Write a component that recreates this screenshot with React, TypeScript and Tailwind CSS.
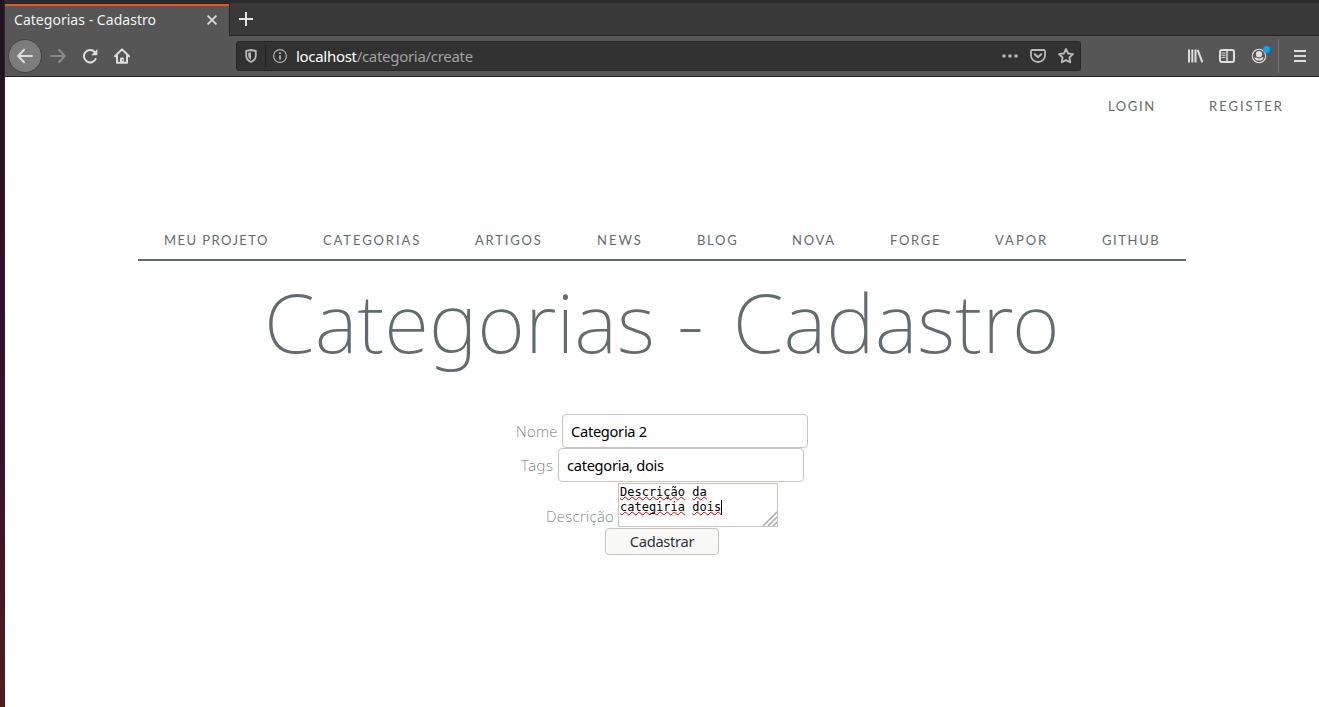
import type { ReactNode } from "react";

const ui = "font-['Noto_Sans',sans-serif]";
const brand = "font-['Lato','Noto_Sans',sans-serif]";

const navItems = [
  { label: "Meu Projeto", box: "w-[159px] tracking-[1.45px]" },
  { label: "Categorias", box: "w-[152px] tracking-[1.9px]" },
  { label: "Artigos", box: "w-[122px] tracking-[1.8px]" },
  { label: "News", box: "w-[100px] tracking-[2px]" },
  { label: "Blog", box: "w-[95px] tracking-[1.7px]" },
  { label: "Nova", box: "w-[98px] tracking-[1.7px]" },
  { label: "Forge", box: "w-[105px] tracking-[1.7px]" },
  { label: "Vapor", box: "w-[107px] tracking-[2px]" },
  { label: "GitHub", box: "w-[60px] tracking-[1.6px]" },
];

function Icon({ className = "", children }: { className?: string; children: ReactNode }) {
  return (
    <svg
      viewBox="0 0 16 16"
      className={`size-4 shrink-0 ${className}`}
      fill="none"
      stroke="currentColor"
      strokeWidth="2"
      strokeLinecap="round"
      strokeLinejoin="round"
    >
      {children}
    </svg>
  );
}

function TabStrip() {
  return (
    <div className="flex h-9 shrink-0 flex-col">
      <div className="h-[3px] bg-[#2a2a2a]" />
      <div className="flex flex-1 bg-[#393939]">
        <div className="flex h-[33px] w-[224px] items-center border-t border-[#252525] bg-[#565656] text-[#f2f2f2]">
          <div className="flex h-8 w-full items-center border-t-2 border-[#e95420] pb-[2px] pl-[9px]">
            <span className={`${ui} w-[193px] text-[14px] leading-[18px] tracking-[0.03px] whitespace-nowrap`}>
              Categorias - Cadastro
            </span>
            <svg viewBox="0 0 10 10" className="size-[10px] text-[#e0e0e0]" stroke="currentColor" strokeWidth="1.7">
              <path d="M.6.6l8.8 8.8M9.4.6L.6 9.4" />
            </svg>
          </div>
        </div>
        <div className="flex flex-1 items-center border-b border-l border-[#252525] pl-[9px] text-[#e4e4e4]">
          <svg viewBox="0 0 14 14" className="size-[14px]" stroke="currentColor" strokeWidth="2">
            <path d="M7 0v14M0 7h14" />
          </svg>
        </div>
      </div>
    </div>
  );
}

function Toolbar() {
  return (
    <div className="flex h-[41px] shrink-0 items-center border-b border-[#252525] bg-[#565656] text-[#dedede]">
      <div className="ml-[3px] flex size-[34px] items-center justify-center rounded-full border border-[#424242] bg-[#7c7c7c]">
        <Icon>
          <path d="M15 8H1.5M7 1.8L1.2 8L7 14.2" />
        </Icon>
      </div>
      <Icon className="ml-2 text-[#8a8a8a]">
        <path d="M1 8H14.5M9 1.8L14.8 8L9 14.2" />
      </Icon>
      <Icon className="ml-4">
        <path d="M14 10.2A6.200 6.200 0 1 1 12.8 4.1" strokeLinecap="butt" />
        <path d="M15.400 1v6.200h-6.200z" fill="currentColor" stroke="none" />
      </Icon>
      <Icon className="ml-4">
        <path d="M1 8.2L8 1.4l7 6.8M3 8v6.8h10V8" />
        <path d="M6 15v-4.5a1 1 0 0 1 1-1h2a1 1 0 0 1 1 1V15z" fill="currentColor" stroke="none" />
        <path d="M8.7 11.8v.8" stroke="#565656" strokeWidth="1" />
      </Icon>

      <div className="ml-[106px] flex h-[30px] w-[845px] shrink-0 items-center rounded-[3px] border border-[#262626] bg-[#323232] text-[#b8b8b8]">
        <svg viewBox="0 0 12 14" className="ml-2 h-[14px] w-3 shrink-0" fill="none">
          <path d="M6 1L1.2 2v4.8c0 3 2 5 4.8 6.2 2.800-1.200 4.800-3.200 4.800-6.200V2z" stroke="currentColor" strokeWidth="1.8" strokeLinejoin="round" />
          <path d="M6 3.200v7.600c-1.700-.9-2.800-2.200-2.800-4V3.800z" fill="currentColor" />
        </svg>
        <div className="ml-2 h-[22px] w-px bg-[#232323]" />
        <svg viewBox="0 0 14 14" className="ml-[7px] size-[14px] shrink-0" fill="none" stroke="currentColor">
          <circle cx="7" cy="7" r="6.400" strokeWidth="1.100" />
          <path d="M7 6.200v4.300M7 3.300v1.700" strokeWidth="1.700" />
        </svg>
        <span className={`${ui} ml-[9px] flex-1 text-[15px] leading-5 tracking-[-0.3px] whitespace-nowrap text-[#a2a2a2]`}>
          <span className="text-white">localhost</span>/categoria/create
        </span>
        <Icon className="text-[#b4b4b4]">
          <path d="M2 8h.01M8 8h.01M14 8h.01" strokeWidth="3.600" />
        </Icon>
        <Icon className="ml-3">
          <path d="M2.200 2h11.600A1.200 1.200 0 0 1 15 3.200V7.500a7 6.500 0 0 1-14 0V3.200A1.200 1.200 0 0 1 2.200 2z" strokeWidth="1.800" />
          <path d="M4.800 6.200L8 9.300l3.200-3.100" />
        </Icon>
        <Icon className="mr-1.5 ml-3">
          <path d="M8 1l2.100 4.500 4.900.6-3.600 3.400.9 4.900L8 12l-4.300 2.400.9-4.900L1 6.100l4.900-.6z" strokeWidth="1.800" />
        </Icon>
      </div>

      <Icon className="ml-[106px]">
        <path d="M2 1.500v13M5.300 1.500v13M8.500 1.500v13M10.600 1.800l4.800 12.500" strokeLinecap="butt" />
      </Icon>
      <Icon className="ml-4">
        <rect x="1" y="2" width="14" height="12" rx="2" />
        <path d="M8 2v12" strokeWidth="1.500" />
        <path d="M3 5h3M3 7.200h3M3 9.400h3" strokeWidth="1" />
      </Icon>
      <div className="relative ml-4 size-4">
        <Icon>
          <circle cx="8" cy="8" r="6.700" strokeWidth="1.100" />
          <circle cx="8" cy="6.200" r="3.100" fill="currentColor" stroke="none" />
          <path d="M3.200 9.400h2.300a3.800 3.800 0 0 0 5 0h2.300A5.200 5.200 0 0 1 3.200 9.400z" fill="currentColor" stroke="none" />
        </Icon>
        <span className="absolute -top-[2px] left-3 size-[7px] rounded-full bg-[#00a9f4]" />
      </div>
      <div className="ml-[11px] h-[34px] w-px bg-[#757575]" />
      <svg viewBox="0 0 12 12" className="ml-[15px] h-3 w-3" stroke="currentColor" strokeWidth="2">
        <path d="M0 1h12M0 6h12M0 11h12" />
      </svg>
    </div>
  );
}

function ResizeGrip() {
  return (
    <svg viewBox="0 0 15 15" className="pointer-events-none absolute right-0 bottom-0 size-[15px]" stroke="#aaa" strokeWidth="1.500">
      <path d="M1 15L15 1M6 15l9-9M11 15l4-4" />
    </svg>
  );
}

function Misspelled({ children }: { children: string }) {
  return (
    <span className="underline decoration-[#e80000] decoration-wavy decoration-[1px] underline-offset-[0px] [text-decoration-skip-ink:none]">
      {children}
    </span>
  );
}

function CategoryForm() {
  const field = `${ui} flex h-[34px] w-[246px] items-center rounded-[4px] border border-[#c8c4be] bg-white pl-2 text-[14.67px] text-black`;
  const label = "font-['Noto_Sans',sans-serif] text-[15px] font-extralight text-[#636b6f] whitespace-nowrap";
  return (
    <form className="mt-[31px] flex flex-col">
      <div className="flex items-center pl-[511px]">
        <label className={`${label} w-[46px] tracking-[0.3px]`}>Nome</label>
        <div className={`${field} tracking-[-0.3px]`}>Categoria 2</div>
      </div>
      <div className="flex items-center pl-[515px]">
        <label className={`${label} w-[38px] pl-px tracking-[0.6px]`}>Tags</label>
        <div className={`${field} tracking-[-0.3px]`}>categoria, dois</div>
      </div>
      <div className="flex items-end pt-px pl-[541px]">
        <label className={`${label} w-[72px] pb-px leading-5 tracking-[0.3px]`}>Descrição</label>
        <div className="relative h-[44px] w-[160px] border border-[#c8c4be] bg-white pt-px pl-px font-['DejaVu_Sans_Mono',monospace] text-[12px] leading-[15px] text-black">
          <div>
            <Misspelled>Descrição</Misspelled> <Misspelled>da</Misspelled>
          </div>
          <div className="flex">
            <span>
              <Misspelled>categiria</Misspelled> <Misspelled>dois</Misspelled>
            </span>
            <span className="h-[15px] w-px bg-black" />
          </div>
          <ResizeGrip />
        </div>
      </div>
      <button
        type="button"
        className={`${ui} mt-px ml-[600px] h-[27px] w-[114px] rounded-[4px] border border-[#c8c4be] bg-[#f8f8f7] pb-[2px] text-[14.67px] leading-5 tracking-[-0.3px] text-[#2e3436]`}
      >
        Cadastrar
      </button>
    </form>
  );
}

export default function App() {
  const link = `${brand} block text-[13px] leading-[18px] font-normal text-[#636b6f] uppercase whitespace-nowrap`;
  return (
    <div className="flex h-[707px] w-[1319px] overflow-hidden bg-white">
      <div className="w-[5px] shrink-0 border-r border-[#252a2b] bg-linear-to-b from-[#211320] from-0% via-[#35132d] via-65% to-[#4b211e]" />
      <div className="flex min-w-0 flex-1 flex-col">
        <TabStrip />
        <Toolbar />
        <main className="flex flex-col">
          <div className="flex pt-5 pl-[1103px]">
            <a className={`${link} w-[101px] tracking-[1.6px]`}>Login</a>
            <a className={`${link} tracking-[2px]`}>Register</a>
          </div>
          <nav className="mt-[116px] ml-[133px] flex h-[30px] w-[1048px] border-b-2 border-[#636b6f] pl-[26px]">
            {navItems.map((item) => (
              <a key={item.label} className={`${link} ${item.box} shrink-0`}>
                {item.label}
              </a>
            ))}
          </nav>
          <h1 className="mt-[9px] h-[113px] pl-[259px] font-['Noto_Sans',sans-serif] text-[82px] leading-[103px] font-extralight whitespace-nowrap text-[#636b6f]">
            Categorias <span className="mr-[8px] ml-px">-</span> Cadastro
          </h1>
          <CategoryForm />
        </main>
      </div>
    </div>
  );
}
